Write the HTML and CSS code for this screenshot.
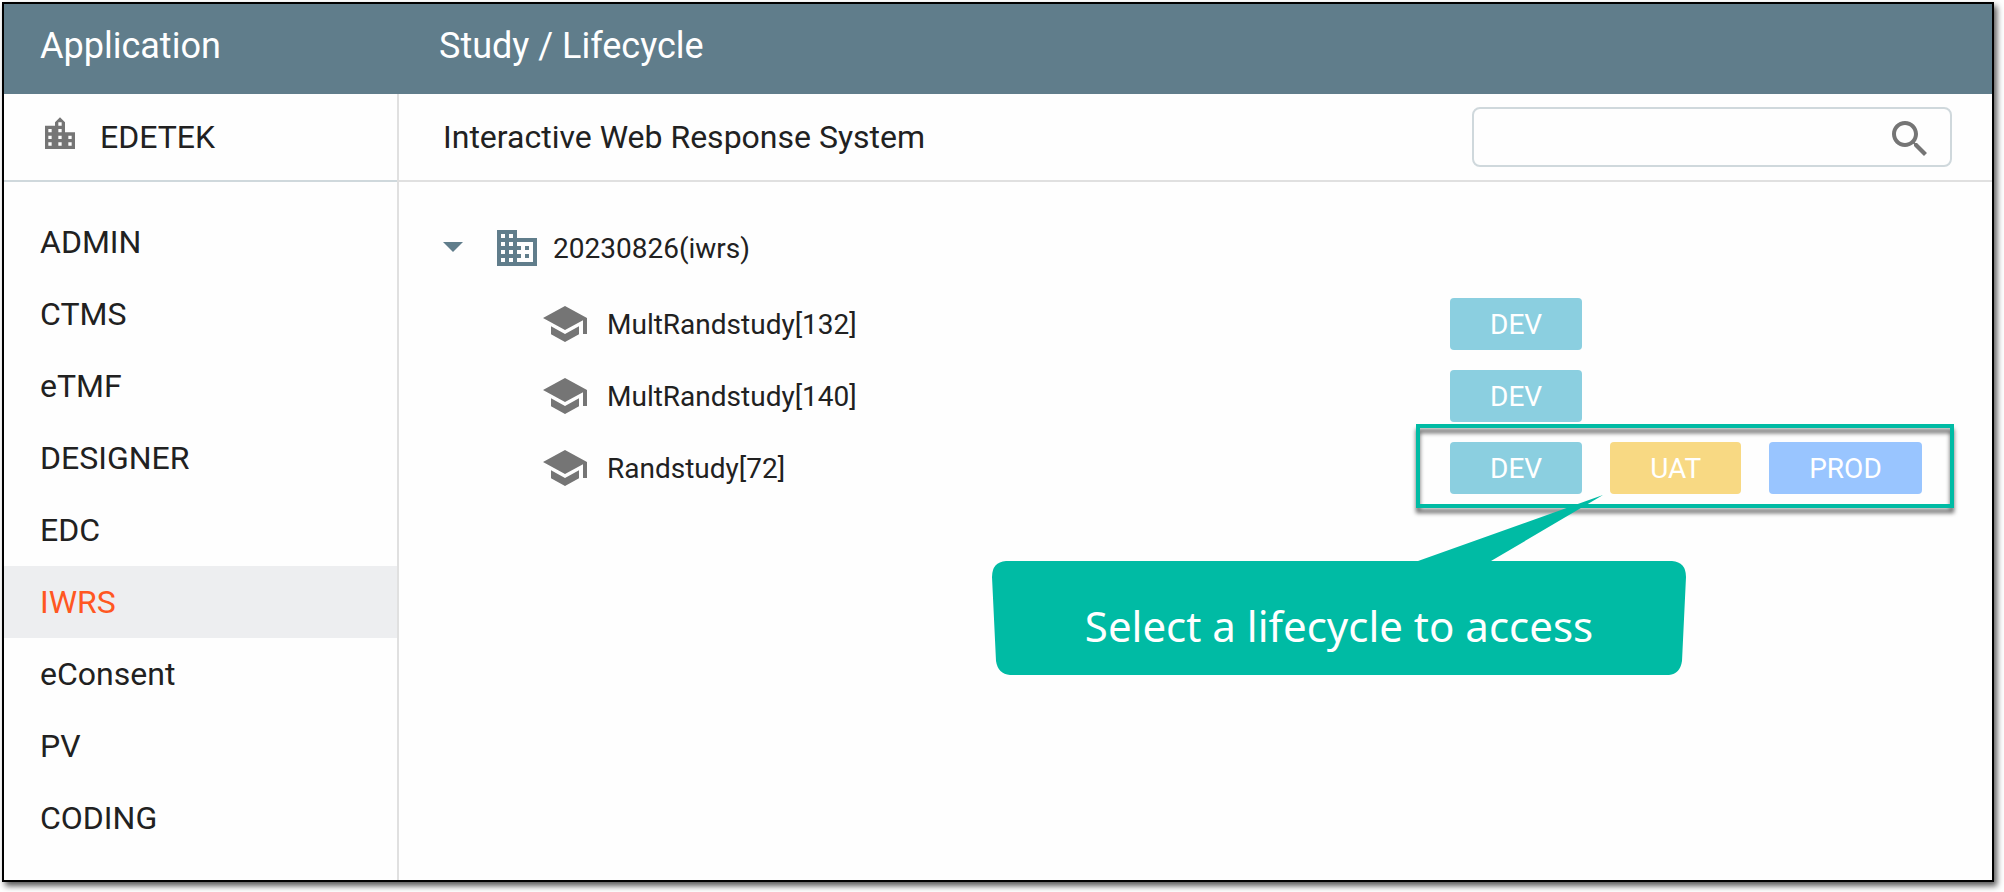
FILE: index.html
```html
<!DOCTYPE html>
<html lang="en">
<head>
<meta charset="utf-8">
<title>Study / Lifecycle</title>
<link rel="stylesheet" href="styles.css">
</head>
<body>
<svg class="sprite" aria-hidden="true">
  <symbol id="school" viewBox="0 0 24 24"><path d="M5 13.18v4L12 21l7-3.820v-4L12 17l-7-3.820zM12 3L1 9l11 6 9-4.910V17h2V9L12 3z"/></symbol>
</svg>
<div class="frame">
  <header class="topbar">
    <h1 class="topbar-app">Application</h1>
    <h1 class="topbar-study">Study / Lifecycle</h1>
  </header>
  <div class="columns">
    <aside class="sidebar">
      <div class="org">
        <svg class="org-icon" viewBox="0 0 24 24" aria-hidden="true"><path d="M15 11V5l-3-3-3 3v2H3v14h18V11h-6zm-8 8H5v-2h2v2zm0-4H5v-2h2v2zm0-4H5V9h2v2zm6 8h-2v-2h2v2zm0-4h-2v-2h2v2zm0-4h-2V9h2v2zm0-4h-2V5h2v2zm6 12h-2v-2h2v2zm0-4h-2v-2h2v2z"/></svg>
        <span>EDETEK</span>
      </div>
      <nav class="apps">
        <a class="app" href="#">ADMIN</a>
        <a class="app" href="#">CTMS</a>
        <a class="app" href="#">eTMF</a>
        <a class="app" href="#">DESIGNER</a>
        <a class="app" href="#">EDC</a>
        <a class="app app-active" href="#" aria-current="page">IWRS</a>
        <a class="app" href="#">eConsent</a>
        <a class="app" href="#">PV</a>
        <a class="app" href="#">CODING</a>
      </nav>
    </aside>
    <main class="main">
      <div class="titlebar">
        <h2 class="title">Interactive Web Response System</h2>
        <form class="search">
          <input class="search-input" type="text" aria-label="Search studies">
          <button class="icon-button" type="button" aria-label="Search">
            <svg class="icon icon-gray" viewBox="0 0 24 24" aria-hidden="true"><path d="M15.500 14h-.79l-.28-.27C15.410 12.590 16 11.110 16 9.500 16 5.910 13.090 3 9.500 3S3 5.910 3 9.500 5.910 16 9.500 16c1.610 0 3.090-.59 4.230-1.570l.27.28v.79l5 4.990L20.490 19l-4.990-5zm-6 0C7.010 14 5 11.990 5 9.500S7.010 5 9.500 5 14 7.010 14 9.500 11.990 14 9.500 14z"/></svg>
          </button>
        </form>
      </div>
      <div class="tree">
        <div class="group">
          <button class="icon-button" type="button" aria-label="Collapse" aria-expanded="true">
            <svg class="icon icon-slate" viewBox="0 0 24 24" aria-hidden="true"><path d="M7 9l5 5 5-5z"/></svg>
          </button>
          <svg class="icon icon-slate" viewBox="0 0 24 24" aria-hidden="true"><path d="M12 7V3H2v18h20V7H12zM6 19H4v-2h2v2zm0-4H4v-2h2v2zm0-4H4V9h2v2zm0-4H4V5h2v2zm4 12H8v-2h2v2zm0-4H8v-2h2v2zm0-4H8V9h2v2zm0-4H8V5h2v2zm10 12h-8v-2h2v-2h-2v-2h2v-2h-2V9h8v10zm-2-8h-2v2h2v-2zm0 4h-2v2h2v-2z"/></svg>
          <span class="group-name">20230826(iwrs)</span>
        </div>
        <ul class="studies">
          <li class="study">
            <div class="study-name"><svg class="icon icon-gray" aria-hidden="true"><use href="#school"/></svg>MultRandstudy[132]</div>
            <div class="cycles"><button class="cycle dev" type="button">DEV</button></div>
          </li>
          <li class="study">
            <div class="study-name"><svg class="icon icon-gray" aria-hidden="true"><use href="#school"/></svg>MultRandstudy[140]</div>
            <div class="cycles"><button class="cycle dev" type="button">DEV</button></div>
          </li>
          <li class="study">
            <div class="study-name"><svg class="icon icon-gray" aria-hidden="true"><use href="#school"/></svg>Randstudy[72]</div>
            <div class="cycles">
              <button class="cycle dev" type="button">DEV</button>
              <button class="cycle uat" type="button">UAT</button>
              <button class="cycle prod" type="button">PROD</button>
              <div class="highlight"></div>
              <div class="callout">
                <svg class="callout-shape" viewBox="0 0 694 180" aria-hidden="true"><path d="M14 66H426L611 0 499 66H680Q694 67 694 82L690 166Q688 179 677 180H18Q6 179 4 166L0 82Q0 67 14 66Z"/></svg>
                <p class="callout-text">Select a lifecycle to access</p>
              </div>
            </div>
          </li>
        </ul>
      </div>
    </main>
  </div>
</div>
</body>
</html>
```

FILE: styles.css
```css
* {
  box-sizing: border-box;
}

body {
  margin: 0;
  padding: 2px 10px 10px 2px;
  min-height: 100vh;
  display: flex;
  background: #fff;
  color: #212121;
  font-family: Roboto, "Liberation Sans", sans-serif;
  font-size: 32px;
  overflow-x: hidden;
}

h1,
h2,
p,
ul {
  margin: 0;
  padding: 0;
  font-weight: 400;
}

button {
  border: 0;
  padding: 0;
  background: none;
  font: inherit;
  cursor: pointer;
}

.sprite {
  position: absolute;
  width: 0;
  height: 0;
}

.frame {
  flex: 1;
  display: flex;
  flex-direction: column;
  border: 2px solid #000;
  background: #fefefe;
  box-shadow: 3px 4px 6px rgba(0, 0, 0, 0.65);
}

.topbar,
.columns {
  display: grid;
  grid-template-columns: 395px 1fr;
}

.topbar {
  height: 90px;
  padding-bottom: 6px;
  align-items: center;
  background: #607d8b;
  color: #fff;
}

.topbar h1 {
  font-size: 36px;
}

.topbar-app {
  padding-left: 36px;
}

.topbar-study {
  padding-left: 40px;
}

.columns {
  flex: 1;
}

.sidebar {
  border-right: 2px solid #e0e0e0;
}

.org {
  height: 88px;
  display: flex;
  align-items: center;
  gap: 20px;
  padding-left: 36px;
  border-bottom: 2px solid #cfd8dc;
}

.org-icon {
  width: 40px;
  height: 40px;
  margin-bottom: 6px;
  fill: #757575;
}

.apps {
  padding: 24px 0;
}

.app {
  height: 72px;
  display: flex;
  align-items: center;
  padding-left: 36px;
  color: inherit;
  text-decoration: none;
}

.app-active {
  background: #edeef0;
  color: #ff5722;
}

.titlebar {
  height: 88px;
  display: flex;
  align-items: center;
  justify-content: space-between;
  padding: 0 40px 0 44px;
  border-bottom: 2px solid #e0e0e0;
}

.title {
  font-size: 32px;
}

.search {
  width: 480px;
  height: 60px;
  display: flex;
  align-items: center;
  padding: 4px 16px 0;
  border: 2px solid #cfd8dc;
  border-radius: 8px;
}

.search-input {
  flex: 1;
  min-width: 0;
  border: 0;
  outline: 0;
  background: none;
  font: inherit;
}

.icon-button {
  display: flex;
}

.icon {
  width: 48px;
  height: 48px;
  flex: none;
}

.icon-gray {
  fill: #757575;
}

.icon-slate {
  fill: #607d8b;
}

.tree {
  padding-top: 30px;
  font-size: 28px;
}

.group {
  height: 72px;
  display: flex;
  align-items: center;
  gap: 16px;
  margin-bottom: 4px;
  padding-left: 30px;
}

.group-name {
  margin-left: -4px;
}

.studies {
  list-style: none;
}

.study {
  height: 72px;
  display: grid;
  grid-template-columns: 1fr 542px;
  align-items: center;
}

.study-name {
  display: flex;
  align-items: center;
  gap: 18px;
  padding-left: 142px;
}

.cycles {
  position: relative;
  display: flex;
  gap: 28px;
}

.cycle {
  height: 52px;
  padding: 0 40px;
  border-radius: 4px;
  color: #fff;
}

.dev {
  background: #8bcfe0;
}

.uat {
  background: #f8d983;
}

.prod {
  background: #99c5ff;
}

.highlight {
  position: absolute;
  left: -34px;
  top: -18px;
  width: 538px;
  height: 84px;
  border: 4px solid #00bba4;
  filter: drop-shadow(0 5px 2px rgba(0, 0, 0, 0.6));
  pointer-events: none;
}

.callout {
  position: absolute;
  left: -458px;
  top: 53px;
  width: 694px;
  height: 180px;
}

.callout-shape {
  display: block;
  width: 694px;
  height: 180px;
  fill: #00bba4;
}

.callout-text {
  position: absolute;
  left: 0;
  right: 0;
  top: 101px;
  color: #fff;
  font-family: "Noto Sans", "Open Sans", sans-serif;
  font-size: 42px;
  line-height: 60px;
  text-align: center;
}
```
